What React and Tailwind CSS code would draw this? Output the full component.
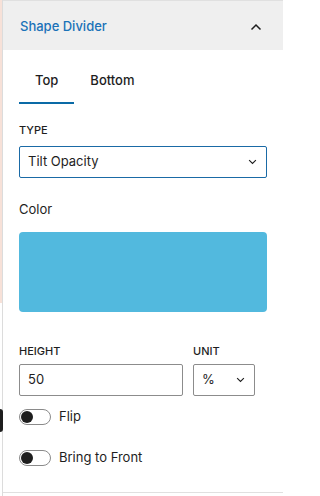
import { useState } from "react"

const font = { fontFamily: "Inter, 'Noto Sans', sans-serif" }

const Chevron = ({ up = false, className = "" }) => (
  <svg viewBox="0 0 12 8" className={className} fill="none" stroke="currentColor" strokeWidth="1.5">
    {up ? <path d="M1.5 6.5 6 2l4.5 4.5" /> : <path d="M1.5 1.5 6 6l4.5-4.5" />}
  </svg>
)

const Toggle = ({ label, on, onClick }) => (
  <div className="flex items-center gap-2 h-4">
    <button onClick={onClick}
      className="relative w-8 h-4 rounded-full border border-[#8a8a8a] bg-white shrink-0">
      <span className={`absolute top-[1px] w-3 h-3 rounded-full bg-[#1e1e1e] ${on ? "left-[17px]" : "left-[1px]"}`} />
    </button>
    <span className="text-[13px] text-[#1e1e1e]">{label}</span>
  </div>
)

export default function App() {
  const [tab, setTab] = useState("Top")
  const [flip, setFlip] = useState(false)
  const [front, setFront] = useState(false)

  return (
    <div className="relative w-[283px] h-[496px] flex bg-white overflow-hidden" style={font}>
      {/* left edge strip */}
      <div className="w-[2px] flex flex-col shrink-0">
        <div className="h-[303px] bg-[#f7e1d8]" />
      </div>
      <div className="absolute left-0 top-[409px] w-[3px] h-[23px] rounded-r-sm bg-[#1e1e1e]" />

      <div className="flex-1 flex flex-col border-l border-[#dcdcdc]">
        <div className="h-[493px] border-t border-b border-[#e0e0e0] flex flex-col">
          {/* header */}
          <div className="h-[49px] bg-[#efefef] flex items-center justify-between pl-[17px] pr-[21px] pt-[2px]">
            <span className="text-[13px] font-medium text-[#1a72b8]">Shape Divider</span>
            <Chevron up className="w-[12px] h-[8px] text-[#1e1e1e]" />
          </div>

          <div className="px-4 pt-[8px] flex flex-col">
            {/* tabs */}
            <div className="flex h-[46px]">
              {["Top", "Bottom"].map(t => (
                <button key={t} onClick={() => setTab(t)}
                  className={`px-4 pt-[2px] text-[13px] font-medium text-[#1e1e1e] border-b-2 ${tab === t ? "border-[#0a6aa6]" : "border-transparent"}`}>
                  {t}
                </button>
              ))}
            </div>

            <label className="mt-[18px] text-[11px] font-medium uppercase leading-4 text-[#1e1e1e]">Type</label>
            <div className="mt-2 h-8 w-[248px] rounded-[2px] border border-[#1a6aa6] flex items-center justify-between pl-2 pr-[9px]">
              <span className="text-[13px] text-[#1e1e1e]">Tilt Opacity</span>
              <Chevron className="w-[9px] h-[6px] text-[#1e1e1e]" />
            </div>

            <span className="mt-[21px] text-[13px] leading-5 text-[#1e1e1e]">Color</span>
            <div className="mt-[13px] h-[80px] w-[248px] rounded-[4px] bg-[#52b9de]" />

            <div className="mt-[31px] flex gap-[10px]">
              <div className="flex flex-col w-[164px]">
                <label className="text-[11px] font-medium uppercase leading-4 text-[#1e1e1e]">Height</label>
                <div className="mt-[5px] h-8 rounded-[2px] border border-[#8c8c8c] flex items-center pl-2">
                  <span className="text-[13px] text-[#1e1e1e]">50</span>
                </div>
              </div>
              <div className="flex flex-col w-[62px]">
                <label className="text-[11px] font-medium uppercase leading-4 text-[#1e1e1e]">Unit</label>
                <div className="mt-[5px] h-8 rounded-[2px] border border-[#8c8c8c] flex items-center justify-between pl-2 pr-[9px]">
                  <span className="text-[13px] text-[#1e1e1e]">%</span>
                  <Chevron className="w-[9px] h-[6px] text-[#1e1e1e]" />
                </div>
              </div>
            </div>

            <div className="mt-[13px] flex flex-col gap-[25px]">
              <Toggle label="Flip" on={flip} onClick={() => setFlip(!flip)} />
              <Toggle label="Bring to Front" on={front} onClick={() => setFront(!front)} />
            </div>
          </div>
        </div>
      </div>
    </div>
  )
}
